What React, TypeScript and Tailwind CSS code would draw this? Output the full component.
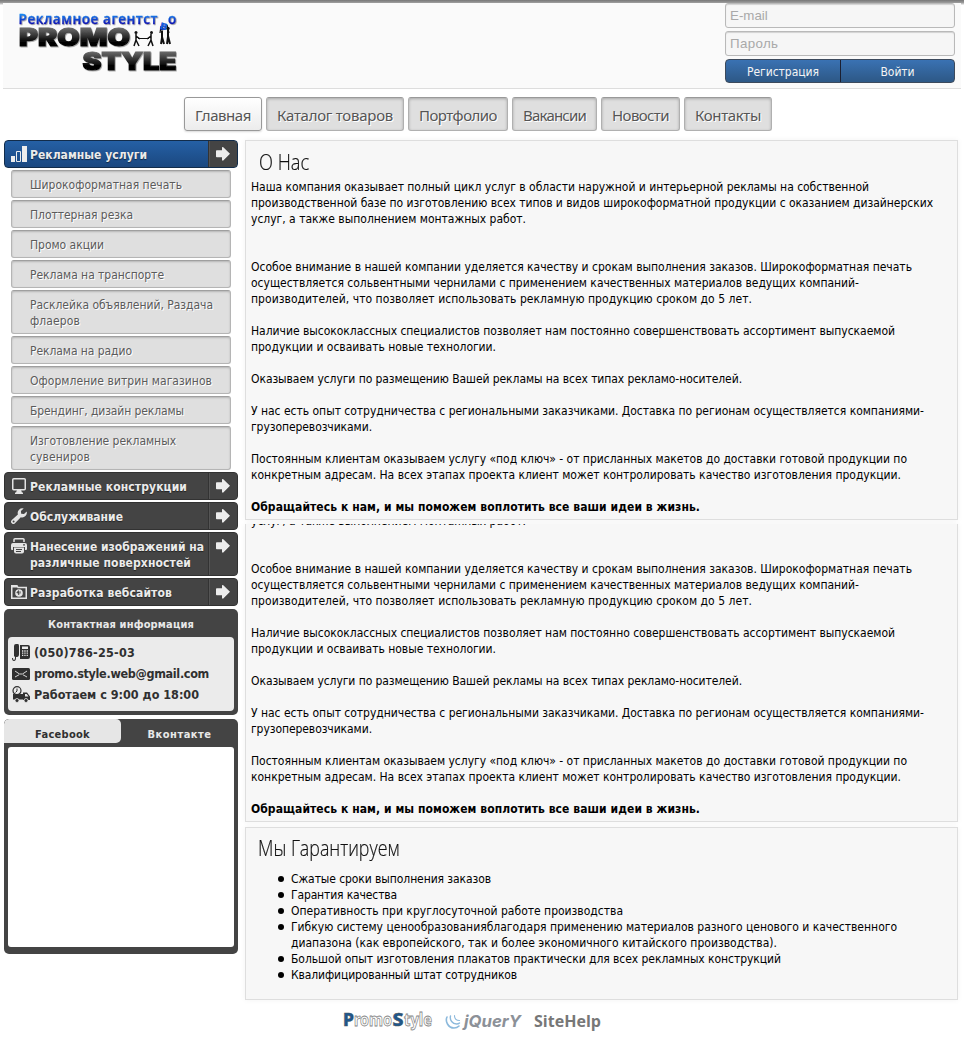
import { useLayoutEffect, useRef, useState, type ReactNode } from "react";

/** Single line of text whose tracking is adjusted so that it spans `w` pixels. */
function Line({ w, children, className = "" }: { w: number; children: string; className?: string }) {
  const ref = useRef<HTMLSpanElement>(null);
  const [spacing, setSpacing] = useState(0);
  useLayoutEffect(() => {
    const el = ref.current;
    if (!el) return;
    el.style.letterSpacing = "0px";
    const natural = el.getBoundingClientRect().width;
    const next = (w - natural) / children.length;
    el.style.letterSpacing = `${next}px`;
    setSpacing(next);
  }, [w, children]);
  return (
    <span ref={ref} className={`inline-block whitespace-nowrap align-top ${className}`} style={{ letterSpacing: `${spacing}px` }}>
      {children}
    </span>
  );
}

type Row = [string, number];

const intro: Row[] = [
  ["Наша компания оказывает полный цикл услуг в области наружной и интерьерной рекламы на собственной", 618],
  ["производственной базе по изготовлению всех типов и видов широкоформатной продукции с оказанием дизайнерских", 682],
];
const introEnd: Row = ["услуг, а также выполнением монтажных работ.", 275];

const paragraphs: Row[][] = [
  [
    ["Особое внимание в нашей компании уделяется качеству и срокам выполнения заказов. Широкоформатная печать", 661],
    ["осуществляется сольвентными чернилами с применением качественных материалов ведущих компаний-", 608],
    ["производителей, что позволяет использовать рекламную продукцию сроком до 5 лет.", 501],
  ],
  [
    ["Наличие высококлассных специалистов позволяет нам постоянно совершенствовать ассортимент выпускаемой", 644],
    ["продукции и осваивать новые технологии.", 245],
  ],
  [["Оказываем услуги по размещению Вашей рекламы на всех типах рекламо-носителей.", 491]],
  [
    ["У нас есть опыт сотрудничества с региональными заказчиками. Доставка по регионам осуществляется компаниями-", 673],
    ["грузоперевозчиками.", 121],
  ],
  [
    ["Постоянным клиентам оказываем услугу «под ключ» - от присланных макетов до доставки готовой продукции по", 656],
    ["конкретным адресам. На всех этапах проекта клиент может контролировать качество изготовления продукции.", 650],
  ],
];

const guarantees: Row[][] = [
  [["Сжатые сроки выполнения заказов", 200]],
  [["Гарантия качества", 106]],
  [["Оперативность при круглосуточной работе производства", 332]],
  [
    ["Гибкую систему ценообразованияблагодаря применению материалов разного ценового и качественного", 606],
    ["диапазона (как европейского, так и более экономичного китайского производства).", 486],
  ],
  [["Большой опыт изготовления плакатов практически для всех рекламных конструкций", 490]],
  [["Квалифицированный штат сотрудников", 226]],
];

const services: Row[][] = [
  [["Широкоформатная печать", 152]],
  [["Плоттерная резка", 103]],
  [["Промо акции", 74]],
  [["Реклама на транспорте", 134]],
  [["Расклейка объявлений, Раздача", 183], ["флаеров", 50]],
  [["Реклама на радио", 102]],
  [["Оформление витрин магазинов", 182]],
  [["Брендинг, дизайн рекламы", 154]],
  [["Изготовление рекламных", 146], ["сувениров", 60]],
];

const nav: Row[] = [
  ["Главная", 57],
  ["Каталог товаров", 117],
  ["Портфолио", 79],
  ["Вакансии", 64],
  ["Новости", 58],
  ["Контакты", 67],
];

function Lines({ rows }: { rows: Row[] }) {
  return (
    <>
      {rows.map(([text, w]) => (
        <div key={text} className="h-4">
          <Line w={w}>{text}</Line>
        </div>
      ))}
    </>
  );
}

function AboutBody() {
  return (
    <>
      <Lines rows={[introEnd]} />
      <div className="mt-8 flex flex-col gap-4">
        {paragraphs.map((p) => (
          <div key={p[0][0]}>
            <Lines rows={p} />
          </div>
        ))}
        <div className="h-4 font-bold">
          <Line w={449}>Обращайтесь к нам, и мы поможем воплотить все ваши идеи в жизнь.</Line>
        </div>
      </div>
    </>
  );
}

function BarsIcon() {
  return (
    <svg width="16" height="16" viewBox="0 0 16 16">
      <path d="M0 10h4v6H0zM11 0h5v16h-5z" fill="#ededed" />
      <path d="M5.500 5.500h4v10h-4z" fill="none" stroke="#ededed" />
    </svg>
  );
}

function MonitorIcon() {
  return (
    <svg width="16" height="16" viewBox="0 0 16 16">
      <rect x="1.75" y=".75" width="12.5" height="11" rx="1" fill="none" stroke="#e4e4e4" strokeWidth="1.5" />
      <path d="M6 12h4l1 2.500h1V16H4v-1.500h1z" fill="#e4e4e4" />
    </svg>
  );
}

function WrenchIcon() {
  return (
    <svg width="16" height="16" viewBox="0 0 16 16">
      <path
        fillRule="evenodd"
        d="M12.700.5A4.700 4.700 0 0 0 6.900 6.400L.8 12A2.200 2.200 0 0 0 4 15.300l5.800-6.100A4.700 4.700 0 0 0 15.700 3.500L13 6.100 10.200 5.700 9.900 3zM2.600 12.600a1 1 0 1 1 0 2 1 1 0 0 1 0-2z"
        fill="#e4e4e4"
      />
    </svg>
  );
}

function PrinterIcon() {
  return (
    <svg width="16" height="16" viewBox="0 0 16 16">
      <path d="M3 4V1.500Q3 .75 4 .75h8q1 0 1 .75V4" fill="none" stroke="#e4e4e4" strokeWidth="1.500" />
      <path fillRule="evenodd" d="M2 5h12q2 0 2 2v4q0 1-1 1h-1V9H2v3H1q-1 0-1-1V7q0-2 2-2zM12 6.300h2v1.200h-2z" fill="#e4e4e4" />
      <path d="M3 9.500h10v4q0 2-2 2H5q-2 0-2-2z" fill="#e4e4e4" />
      <path d="M5 11.500h6M5 13.500h5" stroke="#444" />
    </svg>
  );
}

function FolderIcon() {
  return (
    <svg width="16" height="16" viewBox="0 0 16 16">
      <path d="M.75 14.200V1.750H6L7 3.500h8.250v10.700z" fill="none" stroke="#e4e4e4" strokeWidth="1.500" />
      <path d="M1 1.500h5v2H1z" fill="#e4e4e4" />
      <circle cx="8" cy="9" r="3.800" fill="#e4e4e4" />
      <path d="M7.500 6.500l-1.800 2.200 1.500.3.500 2 .6-2zM9 7l.6 2.500" fill="#444" stroke="#444" strokeWidth=".6" />
    </svg>
  );
}

function Arrow() {
  return (
    <svg width="14" height="14" viewBox="0 0 14 14">
      <path d="M0 4q0-.8.800-.8H6V.300L7 0l7 6.800-7 6.900-1-.4v-3H.800Q0 10.300 0 9.500z" fill="#ececec" />
    </svg>
  );
}

function MenuItem({ icon, rows, active = false }: { icon: ReactNode; rows: Row[]; active?: boolean }) {
  return (
    <div
      className={`flex overflow-hidden rounded-[4px] border ${
        active ? "border-[#122c4a] bg-linear-to-b from-[#2560a5] to-[#1b4880]" : "border-[#323232] bg-[#444]"
      }`}
    >
      <div className="flex flex-1 gap-[3px] py-[5px] pl-[6px]">
        <div className="h-4 w-4">{icon}</div>
        <div className="-mb-px pt-px font-bold text-[#ebebeb] [text-shadow:0_1px_1px_#00000080]">
          <Lines rows={rows} />
        </div>
      </div>
      <div className="flex w-[29px] justify-center border-l border-[#333] bg-[#444] pt-[6px] shadow-[inset_1px_0_0_#555]">
        <Arrow />
      </div>
    </div>
  );
}

function PhoneIcon() {
  return (
    <svg width="18" height="18" viewBox="0 0 18 18">
      <path d="M2 2Q2 0 4 0h2q1 0 1 2v8q0 3-2 3H4v1q0 3-2 3-2 0-2-3h1q0 2 1 2t1-2v-1L2 12z" fill="#303030" />
      <path fillRule="evenodd" d="M8 1h8q2 0 2 2v10q0 2-2 2H8zM10 2.500v2.500h6V2.500z" fill="#303030" />
      <path d="M10 7h6M10 9.200h6M10 11.400h6" stroke="#e8e8e8" strokeWidth="1.300" strokeDasharray="1.300 1" />
    </svg>
  );
}

function MailIcon() {
  return (
    <svg width="18" height="18" viewBox="0 0 18 18">
      <rect y="3" width="18" height="12" rx="1.500" fill="#303030" />
      <path d="M3 6l4.500 3h3L15 6M3 12L7 9.800M15 12L11 9.800" stroke="#e8e8e8" fill="none" strokeWidth=".9" />
    </svg>
  );
}

function TruckIcon() {
  return (
    <svg width="18" height="18" viewBox="0 0 18 18">
      <path d="M1 8h10v5.500H1zM11 6.500h4l3 4V14h-7z" fill="#303030" />
      <path d="M13 8h1.700l1.800 2.500H13z" fill="#e8e8e8" />
      <circle cx="5" cy="14.500" r="2" fill="#303030" stroke="#e8e8e8" strokeWidth=".8" />
      <circle cx="14" cy="14.500" r="2" fill="#303030" stroke="#e8e8e8" strokeWidth=".8" />
      <circle cx="5" cy="4.700" r="4" fill="#ececec" stroke="#303030" strokeWidth="1.200" />
      <path d="M5 2.500v2.500L3.500 6.500" stroke="#303030" fill="none" />
    </svg>
  );
}

function Logo() {
  return (
    <svg width="170" height="68" viewBox="14 8 170 68" role="img" aria-label="Promo Style">
      <defs>
        <linearGradient id="blue" x1="0" y1="0" x2="0" y2="1">
          <stop offset=".25" stopColor="#1487f0" />
          <stop offset=".8" stopColor="#0808ae" />
        </linearGradient>
        <linearGradient id="coal" x1="0" y1="0" x2="0" y2="1">
          <stop offset=".2" stopColor="#666" />
          <stop offset=".65" stopColor="#050505" />
        </linearGradient>
        <filter id="halo" x="-5%" y="-10%" width="112%" height="130%">
          <feDropShadow dx=".8" dy=".8" stdDeviation=".5" floodColor="#555" floodOpacity=".6" />
        </filter>
      </defs>
      <g filter="url(#halo)">
        <g fontFamily="Open Sans" fontWeight="600" fontSize="13.500" fill="url(#blue)" stroke="url(#blue)" strokeWidth=".3">
          <text x="18.500" y="24" textLength="139" lengthAdjust="spacing">Рекламное агентст</text>
          <text x="168" y="24" textLength="9">о</text>
        </g>
        <g fontFamily="Inter" fontWeight="900" fontSize="24" fill="url(#coal)" stroke="url(#coal)" strokeWidth="1.200">
          <text x="19" y="46" textLength="111" lengthAdjust="spacingAndGlyphs">PROMO</text>
          <text x="82.500" y="69.500" textLength="94" lengthAdjust="spacingAndGlyphs">STYLE</text>
        </g>
      </g>
      <g stroke="#111" strokeWidth="1.500" fill="none">
        <path d="M136 34v6l-2 6M136 40l3 6M136 36l4 3M151 34v6l-3 6M151 40l2 6M151 36l-4 3" />
        <path d="M138 38.500h11" strokeWidth="1" />
        <path d="M162 31v7l-1 6M162 37l2 7M168 30v7l-1 7M168 36l2 8" strokeWidth="2" />
        <path d="M160 33l1-7M169 33l-2-8" strokeWidth="1.200" />
      </g>
      <g fill="#111">
        <circle cx="136" cy="32.500" r="1.500" />
        <circle cx="151.500" cy="32.500" r="1.500" />
        <circle cx="162" cy="29" r="1.700" />
        <circle cx="168" cy="28.500" r="1.700" />
      </g>
      <text x="160" y="29.500" fontFamily="Open Sans" fontWeight="700" fontSize="12" fill="#1267e6" stroke="#0b2fba" strokeWidth=".4" transform="rotate(14 163 26)">в</text>
    </svg>
  );
}

function FooterLogos() {
  return (
    <svg width="262" height="24" viewBox="342 1008 262 24">
      <g fontFamily="Noto Sans" fontSize="17.500">
        <text x="343" y="1026" textLength="11" lengthAdjust="spacingAndGlyphs" fontWeight="800" fill="#1d588f" stroke="#555" strokeWidth=".5">P</text>
        <text x="354" y="1026" textLength="38" lengthAdjust="spacingAndGlyphs" fill="#fff" fontWeight="700" stroke="#858585" strokeWidth=".8">romo</text>
        <text x="392.500" y="1026" textLength="11" lengthAdjust="spacingAndGlyphs" fontWeight="800" fill="#1d588f" stroke="#555" strokeWidth=".5">S</text>
        <text x="404" y="1026" textLength="28" lengthAdjust="spacingAndGlyphs" fill="#fff" fontWeight="700" stroke="#858585" strokeWidth=".8">tyle</text>
      </g>
      <g fill="none" stroke="#8cb9dc" strokeLinecap="round">
        <path d="M447 1017c-2 4 1 11 7 11q3 0 5-2" strokeWidth="1.600" />
        <path d="M450.500 1016c-1 4 2 8 6 8q2 0 3-1" strokeWidth="1.400" />
        <path d="M454.500 1015.500c0 3 2 5 5 5" strokeWidth="1.100" />
      </g>
      <text x="464" y="1027" textLength="57" lengthAdjust="spacingAndGlyphs" fontFamily="Inter" fontStyle="italic" fontWeight="700" fontSize="16.500" fill="#8c9198">jQuerY</text>
      <text x="534" y="1026.500" textLength="67" lengthAdjust="spacingAndGlyphs" fontFamily="Open Sans" fontWeight="700" fontSize="15.500" fill="#777">SiteHelp</text>
    </svg>
  );
}

const panel = "border border-[#dedede] bg-[#f7f7f7] shadow-[0_0_6px_#0000000d]";
const field =
  "h-[25px] w-full rounded-[3px] border border-[#b9b9b9] bg-[#f6f6f6] px-1 font-['Liberation_Sans',sans-serif] text-[13.33px] shadow-[inset_0_1px_1px_#00000026] outline-none placeholder:text-[#a9a9a9]";
const heading = "w-max origin-left font-['Open_Sans',sans-serif] text-[22px] font-light leading-[30px] text-[#111] [-webkit-text-stroke:0.2px_#111]";

export default function App() {
  return (
    <div className="h-[1039px] w-[964px] overflow-hidden bg-white font-['DejaVu_Sans_Condensed','DejaVu_Sans',sans-serif] text-[12px] leading-4 text-black">
      <div className="h-[5px] bg-linear-to-b from-[#777] via-[#999] to-[#f8f8f8]" />
      <header className="mx-[3px] -mt-[2px] flex h-[86px] justify-between border-b border-[#ddd] bg-[#fafafa] pl-[11px] pr-[6px]">
        <div className="pt-[5px]">
          <Logo />
        </div>
        <form className="flex w-[230px] flex-col gap-[3px]">
          <input className={field} placeholder="E-mail" />
          <input className={`${field} tracking-[0.35px]`} placeholder="Пароль" type="text" />
          <div className="flex h-[24px] overflow-hidden rounded-[4px] border border-[#3c4a5c] bg-linear-to-b from-[#3a72b3] to-[#2d5886] text-center leading-[24px] text-[#f4f4f4] [text-shadow:0_1px_1px_#000]">
            <button type="button" className="w-[115px] border-r border-[#1b1f31]">
              <Line w={72}>Регистрация</Line>
            </button>
            <button type="button" className="flex-1">
              <Line w={34}>Войти</Line>
            </button>
          </div>
        </form>
      </header>

      <nav className="mt-2 flex h-[34px] gap-1 pl-[184px]">
        {nav.map(([text, w], i) => (
          <a
            key={text}
            className={`rounded-[3px] border px-[10px] pt-[8px] font-['Noto_Sans',sans-serif] text-[15px] leading-[18px] text-[#555] [text-shadow:1px_1px_0_#fff] ${
              i === 0
                ? "border-[#999] bg-linear-to-b from-white to-[#ececec] shadow-[0_1px_2px_#00000026]"
                : "border-[#b0b0b0] border-t-[#999] bg-[#dfdfdf] shadow-[inset_0_1px_3px_#00000040]"
            }`}
          >
            <Line w={w - 1}>{text}</Line>
          </a>
        ))}
      </nav>

      <div className="mt-[9px] flex gap-[7px] pl-1">
        <aside className="w-[234px]">
          <div className="flex flex-col gap-[2px]">
            <MenuItem active icon={<BarsIcon />} rows={[["Рекламные услуги", 117]]} />
            {services.map((rows) => (
              <div
                key={rows[0][0]}
                className="mx-[7px] rounded-[3px] border border-[#b5b5b5] border-t-[#9f9f9f] bg-[#dfdfdf] pb-[4px] pl-[18px] pt-[6px] text-[#5b5b5b] shadow-[inset_0_1px_2px_#00000030] [text-shadow:1px_1px_0_#fff]"
              >
                <Lines rows={rows} />
              </div>
            ))}
            <MenuItem icon={<MonitorIcon />} rows={[["Рекламные конструкции", 157]]} />
            <MenuItem icon={<WrenchIcon />} rows={[["Обслуживание", 93]]} />
            <MenuItem icon={<PrinterIcon />} rows={[["Нанесение изображений на", 174], ["различные поверхностей", 161]]} />
            <MenuItem icon={<FolderIcon />} rows={[["Разработка вебсайтов", 142]]} />
          </div>

          <section className="mt-[3px] h-[106px] rounded-[5px] bg-[#444] px-1 pt-[7px]">
            <h3 className="h-[21px] pt-px text-center text-[11px] font-bold leading-4 text-[#e8e8e8]">
              <Line w={146}>Контактная информация</Line>
            </h3>
            <div className="flex h-[74px] flex-col gap-[3px] rounded-[4px] bg-[#ebebeb] pl-1 pt-[7px] text-[12.5px] font-bold leading-[18px] text-[#303030]">
              <div className="flex h-[18px] gap-1">
                <PhoneIcon />
                <Line w={101}>(050)786-25-03</Line>
              </div>
              <div className="flex h-[18px] gap-1">
                <MailIcon />
                <Line w={175}>promo.style.web@gmail.com</Line>
              </div>
              <div className="flex h-[18px] gap-1">
                <TruckIcon />
                <Line w={165}>Работаем с 9:00 до 18:00</Line>
              </div>
            </div>
          </section>

          <section className="mt-1 h-[235px] overflow-hidden rounded-[5px] bg-[#444]">
            <div className="flex h-[28px] text-center text-[11px] font-bold">
              <div className="h-[24px] w-[117px] rounded-t-[5px] rounded-br-[5px] bg-[#e6e6e6] pt-[8px] text-[#303030]">
                <Line w={55}>Facebook</Line>
              </div>
              <div className="flex-1 pt-[8px] text-[#e8e8e8]">
                <Line w={64}>Вконтакте</Line>
              </div>
            </div>
            <div className="mx-1 h-[200px] rounded-[3px] bg-white" />
          </section>
        </aside>

        <main className="w-[713px]">
          <section className={`${panel} h-[380px] pl-[5px]`}>
            <div className="h-[38px] pl-[8px] pt-[5px]">
              <h2 className={`${heading} scale-x-[.83]`}>О Нас</h2>
            </div>
            <Lines rows={intro} />
            <AboutBody />
          </section>
          <section className={`${panel} mt-1 h-[298px] overflow-hidden border-t-0 pl-[5px]`}>
            <div className="-mt-[11px]">
              <AboutBody />
            </div>
          </section>
          <section className={`${panel} mt-[5px] h-[173px] pl-[5px]`}>
            <div className="h-[43px] pl-[7px] pt-[4px]">
              <h2 className={`${heading} scale-x-[.81]`}>Мы Гарантируем</h2>
            </div>
            <ul className="pl-[27px]">
              {guarantees.map((rows) => (
                <li key={rows[0][0]} className="flex gap-[7px]">
                  <span className="mt-[5px] h-[6px] w-[6px] rounded-full bg-black" />
                  <div>
                    <Lines rows={rows} />
                  </div>
                </li>
              ))}
            </ul>
          </section>
        </main>
      </div>

      <footer className="mt-2 pl-[342px]">
        <FooterLogos />
      </footer>
    </div>
  );
}
